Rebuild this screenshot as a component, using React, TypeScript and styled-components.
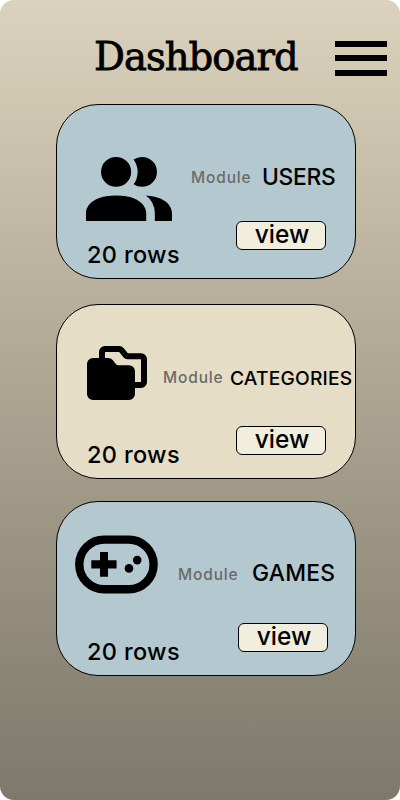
import React from "react";
import styled, { createGlobalStyle } from "styled-components";

const GlobalStyle = createGlobalStyle`
  body {
    margin: 0;
    background: #fff;
  }
  * {
    box-sizing: border-box;
  }
`;

const Screen = styled.main`
  width: 400px;
  height: 800px;
  border-radius: 14px;
  overflow: hidden;
  background: linear-gradient(180deg, #dad2bc 0%, #cfc7b0 13%, #b7af9b 38%, #a09987 62%, #8a8475 86%, #7f796c 100%);
  color: #000;
  font-family: Inter, "Open Sans", sans-serif;
  font-weight: 500;
`;

const Header = styled.header`
  display: flex;
  height: 104px;
  padding-left: 94px;
`;

const Title = styled.h1`
  width: 241px;
  margin: 31px 0 0;
  font: 500 38.5px/52px "DejaVu Serif", serif;
  letter-spacing: -0.95px;
  -webkit-text-stroke: 0.8px #000;
  white-space: nowrap;
`;

const MenuButton = styled.button`
  display: flex;
  flex-direction: column;
  justify-content: space-between;
  width: 52px;
  height: 34.6px;
  margin: 41px 0 0;
  padding: 0;
  border: 0;
  background: none;
`;

const MenuBar = styled.span`
  width: 100%;
  height: 5.8px;
  background: #000;
`;

const CardList = styled.section`
  display: flex;
  flex-direction: column;
  align-items: center;
  width: 300px;
  margin-left: 56px;
`;

const Card = styled.article<{ $tone: string; $gap: number }>`
  display: flex;
  flex-direction: column;
  width: 300px;
  height: 175px;
  margin-bottom: ${(p) => p.$gap}px;
  border: 1px solid #000;
  border-radius: 42px;
  background: ${(p) => p.$tone};
`;

const CardTop = styled.div`
  display: flex;
  height: 112px;
`;

const IconSlot = styled.div<{ $left: number; $top: number; $width: number }>`
  flex: none;
  width: ${(p) => p.$width}px;
  padding: ${(p) => p.$top}px 0 0 ${(p) => p.$left}px;

  svg {
    display: block;
    overflow: visible;
  }
`;

const ModuleLabel = styled.span<{ $width: number }>`
  flex: none;
  width: ${(p) => p.$width}px;
  margin-top: 62.5px;
  color: #6b6b6b;
  font-size: 15.5px;
  line-height: 20px;
  letter-spacing: 0.85px;
`;

const ModuleName = styled.h2<{ $size: number; $top: number; $spacing: number }>`
  margin: ${(p) => p.$top}px 0 0;
  font-size: ${(p) => p.$size}px;
  font-weight: 500;
  line-height: 30px;
  letter-spacing: ${(p) => p.$spacing}px;
  white-space: nowrap;
`;

const CardBottom = styled.div`
  display: flex;
  justify-content: space-between;
  height: 61px;
  padding-left: 30px;
`;

const RowCount = styled.span`
  margin-top: 23px;
  font-size: 23.5px;
  line-height: 30px;
  letter-spacing: 0.35px;
`;

const ViewButton = styled.button<{ $top: number; $right: number }>`
  width: 90px;
  height: 29px;
  margin: ${(p) => p.$top}px ${(p) => p.$right}px 0 0;
  padding: 0 0 2px 2px;
  border: 1px solid #000;
  border-radius: 6px;
  background: #f1eedd;
  color: #000;
  font: inherit;
  font-size: 24.5px;
  line-height: 25px;
`;

const UsersIcon = () => (
  <svg width="86" height="64" viewBox="2 4 20 15" preserveAspectRatio="none">
    <path d="M16 17V19H2V17S2 13 9 13 16 17 16 17M12.5 7.5A3.5 3.5 0 1 0 9 11A3.5 3.5 0 0 0 12.5 7.5M15.94 13A5.32 5.32 0 0 1 18 17V19H22V17S22 13.37 15.94 13M15 4A3.39 3.39 0 0 0 13.07 4.59A5 5 0 0 1 13.07 10.41A3.39 3.39 0 0 0 15 11A3.5 3.5 0 0 0 15 4Z" />
  </svg>
);

const FoldersIcon = () => (
  <svg width="60" height="54" viewBox="0 0 20 18">
    <path
      d="M5 6V2a1 1 0 0 1 1-1h4.7a1 1 0 0 1 .8.4L12.9 3.1a1 1 0 0 0 .7.3H18a1 1 0 0 1 1 1V12a1 1 0 0 1-1 1h-4"
      fill="none"
      stroke="#000"
      strokeWidth="2"
    />
    <path d="M2 4h5.2a2 2 0 0 1 1.5.8l.9 1.2a.9.9 0 0 0 .7.4H14a2 2 0 0 1 2 2V16a2 2 0 0 1-2 2H2a2 2 0 0 1-2-2V6a2 2 0 0 1 2-2Z" />
  </svg>
);

const GamepadIcon = () => (
  <svg width="83" height="59" viewBox="0 0 83 59">
    <rect x="4.3" y="4.6" width="74.3" height="49.6" rx="24.8" fill="none" stroke="#000" strokeWidth="8.4" />
    <path d="M25 17h8v8.2h8.6v8.2H33v8.3h-8v-8.3h-8.7v-8.2H25Z" />
    <circle cx="54" cy="33.4" r="4.3" />
    <circle cx="62.2" cy="25.1" r="4.3" />
  </svg>
);

const modules = [
  {
    name: "USERS", tone: "#b4c8cf", gap: 25, icon: <UsersIcon />,
    iconLeft: 29, iconTop: 52, iconWidth: 134, labelWidth: 71,
    size: 22.8, nameTop: 56.5, spacing: -0.3, buttonTop: 4, buttonRight: 29,
  },
  {
    name: "CATEGORIES", tone: "#e5ddc5", gap: 22, icon: <FoldersIcon />,
    iconLeft: 30, iconTop: 41, iconWidth: 106, labelWidth: 67,
    size: 19.2, nameTop: 58, spacing: 0.2, buttonTop: 9, buttonRight: 29,
  },
  {
    name: "GAMES", tone: "#b4c8cf", gap: 0, icon: <GamepadIcon />,
    iconLeft: 18, iconTop: 33, iconWidth: 121, labelWidth: 74,
    size: 22.8, nameTop: 56, spacing: 0.25, buttonTop: 9, buttonRight: 27,
  },
];

export default function App() {
  return (
    <>
      <GlobalStyle />
      <Screen>
        <Header>
          <Title>Dashboard</Title>
          <MenuButton aria-label="Menu">
            <MenuBar />
            <MenuBar />
            <MenuBar />
          </MenuButton>
        </Header>
        <CardList>
          {modules.map((m) => (
            <Card key={m.name} $tone={m.tone} $gap={m.gap}>
              <CardTop>
                <IconSlot $left={m.iconLeft} $top={m.iconTop} $width={m.iconWidth}>
                  {m.icon}
                </IconSlot>
                <ModuleLabel $width={m.labelWidth}>Module</ModuleLabel>
                <ModuleName $size={m.size} $top={m.nameTop} $spacing={m.spacing}>
                  {m.name}
                </ModuleName>
              </CardTop>
              <CardBottom>
                <RowCount>20 rows</RowCount>
                <ViewButton $top={m.buttonTop} $right={m.buttonRight}>view</ViewButton>
              </CardBottom>
            </Card>
          ))}
        </CardList>
      </Screen>
    </>
  );
}
